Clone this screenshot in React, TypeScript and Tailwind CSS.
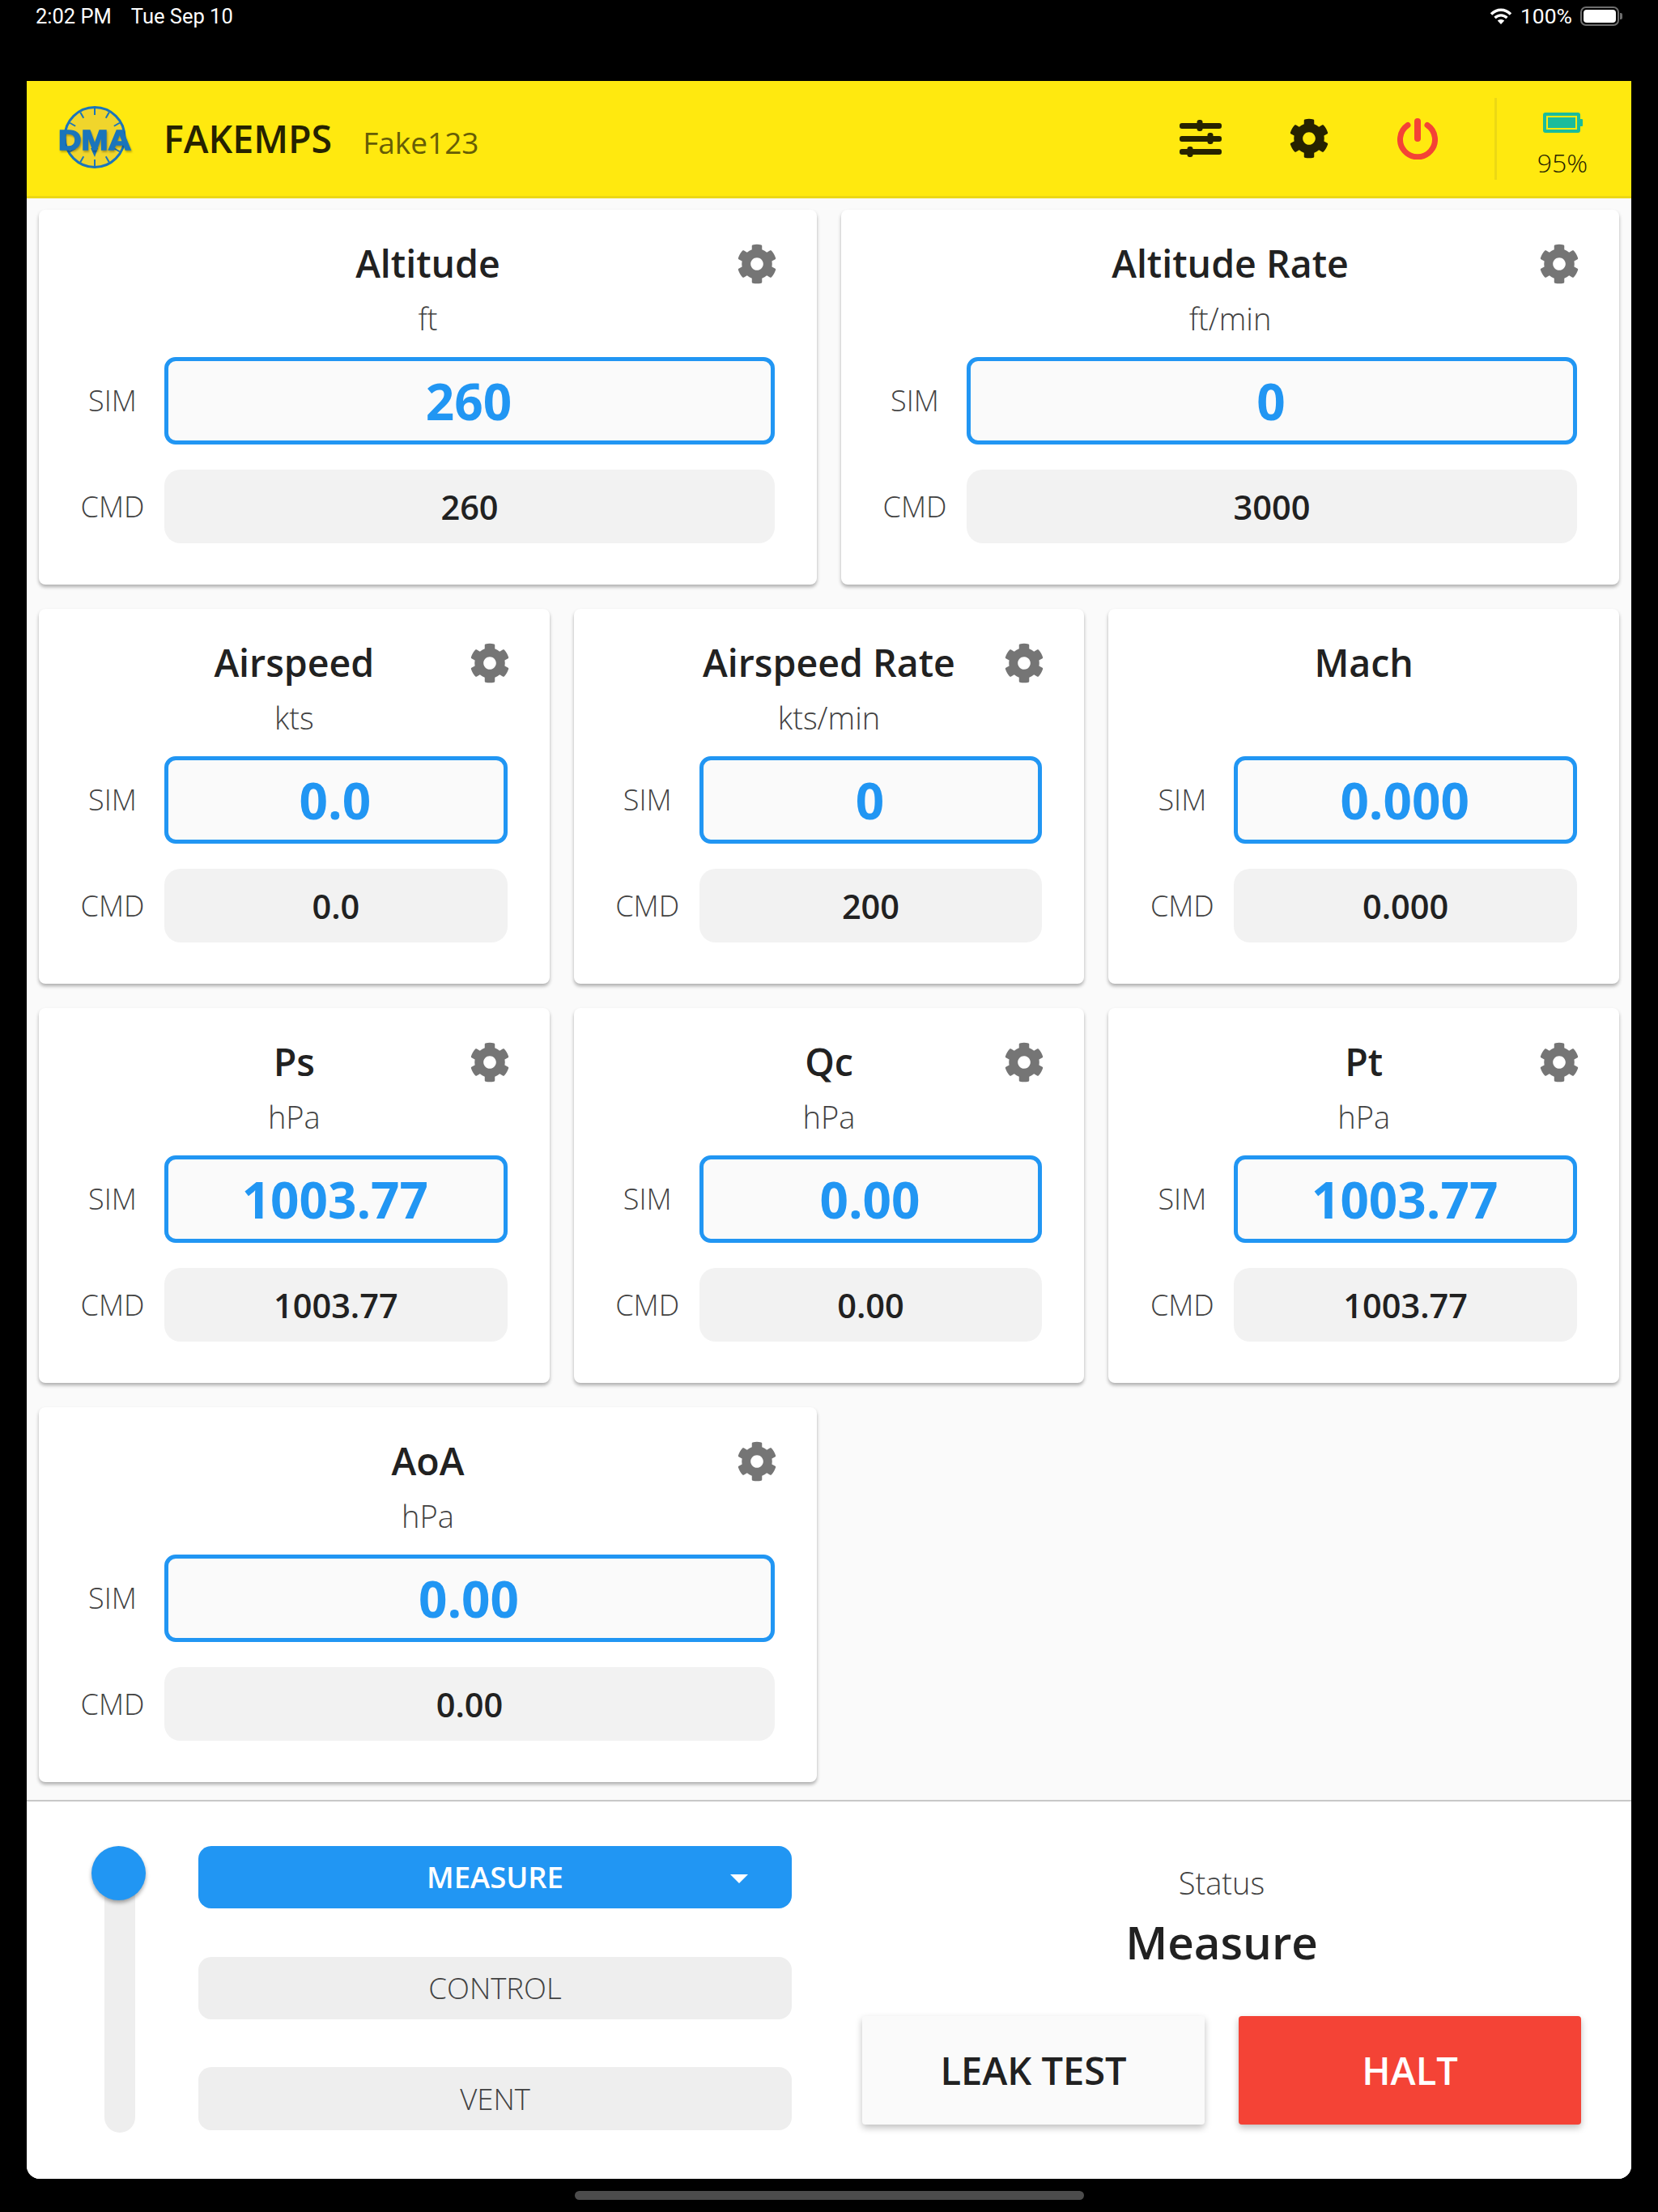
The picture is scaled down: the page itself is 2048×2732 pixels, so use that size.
const font = "font-['Open_Sans',sans-serif]";

function Gear({ className }: { className: string }) {
	return (
		<svg viewBox="0 0 512 512" className={className} fill="currentColor">
			<path d="M487.4 315.7l-42.6-24.6c4.3-23.2 4.3-47 0-70.2l42.6-24.6c4.9-2.8 7.1-8.6 5.5-14-11.1-35.6-30-67.8-54.7-94.6-3.8-4.1-10-5.1-14.8-2.3L380.8 110c-17.9-15.4-38.5-27.3-60.8-35.1V25.8c0-5.6-3.9-10.5-9.4-11.7-36.7-8.2-74.3-7.8-109.2 0-5.5 1.2-9.4 6.1-9.4 11.7V75c-22.2 7.9-42.8 19.8-60.8 35.1L88.7 85.5c-4.9-2.8-11-1.9-14.8 2.3-24.7 26.7-43.6 58.9-54.7 94.6-1.7 5.4.6 11.2 5.5 14L67.3 221c-4.3 23.2-4.3 47 0 70.2l-42.6 24.6c-4.9 2.8-7.1 8.6-5.5 14 11.1 35.6 30 67.8 54.7 94.6 3.8 4.1 10 5.1 14.8 2.3l42.6-24.6c17.9 15.4 38.5 27.3 60.8 35.1v49.2c0 5.6 3.9 10.5 9.4 11.7 36.7 8.2 74.3 7.8 109.2 0 5.5-1.2 9.4-6.1 9.4-11.7v-49.2c22.2-7.9 42.8-19.8 60.8-35.1l42.6 24.6c4.9 2.8 11 1.9 14.8-2.3 24.7-26.7 43.6-58.9 54.7-94.6 1.5-5.5-.7-11.3-5.6-14.1zM256 336c-44.1 0-80-35.9-80-80s35.9-80 80-80 80 35.9 80 80-35.9 80-80 80z" />
		</svg>
	);
}

function Sliders() {
	return (
		<svg viewBox="0 0 52 46" className="w-[52px] h-[46px]" fill="#262200">
			<rect x="0" y="4" width="52" height="7" rx="3" />
			<rect x="21.5" y="0" width="7" height="14" rx="3" />
			<rect x="0" y="20" width="52" height="7" rx="3" />
			<rect x="34.5" y="16" width="7" height="14" rx="3" />
			<rect x="0" y="36" width="52" height="7" rx="3" />
			<rect x="9.5" y="33" width="7" height="13" rx="3" />
		</svg>
	);
}

function Power() {
	return (
		<svg viewBox="0 0 50 51" className="w-[50px] h-[51px]" fill="none" stroke="#f44336" strokeLinecap="round">
			<path d="M13 8.5 A21.5 21.5 0 1 0 37 8.5" strokeWidth="7" />
			<path d="M25 4 V25" strokeWidth="8" />
		</svg>
	);
}

function Logo() {
	const ticks = [0, 30, 60, 120, 150, 180, 210, 240, 300, 330];
	return (
		<svg viewBox="0 0 90 80" className="w-[90px] h-[80px] overflow-visible">
			<circle cx="45" cy="38.5" r="37" fill="#f0d52c" stroke="#1b75bb" strokeWidth="3" />
			{ticks.map((t) => (
				<line
					key={t}
					x1="45"
					y1="3"
					x2="45"
					y2="11"
					stroke="#1b75bb"
					strokeWidth="2"
					transform={`rotate(${t} 45 38.5)`}
				/>
			))}
			<path d="M40 52 L45 63 L49 52 Z" fill="#1b75bb" />
			<text
				x="45"
				y="53.5"
				textAnchor="middle"
				fontFamily="'Liberation Sans', sans-serif"
				fontWeight="700"
				fontSize="35"
				fill="#1b75bb"
				stroke="#1b75bb"
				strokeWidth="1.6"
				textLength="90"
				lengthAdjust="spacingAndGlyphs"
				className="drop-shadow-[1px_2px_1px_rgba(0,0,0,0.3)]"
			>
				DMA
			</text>
		</svg>
	);
}

function StatusBar() {
	return (
		<div className="h-[100px] shrink-0 flex items-start justify-between pl-[44px] pr-[44px] pt-[6px] text-white text-[25.5px] leading-[28px] font-['Roboto',sans-serif]">
			<div className="flex gap-[24px]">
				<span>2:02 PM</span>
				<span>Tue Sep 10</span>
			</div>
			<div className="flex items-center gap-[10px]">
				<svg viewBox="0 0 28 22" className="w-[28px] h-[22px]" fill="none" stroke="#fff" strokeWidth="3.4">
					<path d="M2 8.5 C9 1.5 19 1.5 26 8.5" />
					<path d="M6.5 13 C11 8.8 17 8.8 21.5 13" />
					<path d="M14 21 L9.8 16.6 C12 14.6 16 14.6 18.2 16.6 Z" fill="#fff" stroke="none" />
				</svg>
				<span className="text-[26.5px]">100%</span>
				<div className="flex items-center gap-[1px]">
					<div className="w-[48px] h-[24px] rounded-[7px] border-2 border-[#6e6e6e] p-[2px]">
						<div className="w-full h-full rounded-[4px] bg-white" />
					</div>
					<div className="w-[3px] h-[8px] rounded-r-[2px] bg-[#6e6e6e]" />
				</div>
			</div>
		</div>
	);
}

function Header() {
	return (
		<div className={`h-[145px] shrink-0 flex items-center bg-[#ffe90f] border-b-[3px] border-[#ecd815] ${font}`}>
			<div className="ml-[39px] w-[90px] flex justify-center">
				<Logo />
			</div>
			<span className="ml-[40px] text-[46.5px] font-semibold text-[#262200] leading-none">FAKEMPS</span>
			<span className="ml-[38px] mt-[8px] text-[37px] text-[#665d06] leading-none">Fake123</span>
			<div className="ml-auto flex items-center">
				<Sliders />
				<Gear className="ml-[83px] w-[50px] h-[50px] text-[#262200]" />
				<div className="ml-[84px]">
					<Power />
				</div>
				<div className="ml-[70px] w-[3px] h-[101px] bg-[#ecd815]" />
				<div className="w-[166px] pr-[4px] pt-[16px] flex flex-col items-center">
					<svg viewBox="0 0 49 25" className="w-[49px] h-[25px]">
						<rect x="0" y="0" width="46" height="25" rx="3" fill="#1abc9c" />
						<rect x="5" y="5" width="36" height="15" fill="#1abc9c" stroke="#ffe90f" strokeWidth="2" />
						<rect x="45" y="8" width="4" height="9" rx="1" fill="#1abc9c" />
					</svg>
					<span className="mt-[19px] text-[32px] leading-[36px] font-light text-[#262200]">95%</span>
				</div>
			</div>
		</div>
	);
}

interface CardProps {
	title: string;
	unit?: string;
	sim: string;
	cmd: string;
	gear?: boolean;
	wide?: boolean;
}

function Card({ title, unit, sim, cmd, gear = true, wide = false }: CardProps) {
	return (
		<div
			className={`${wide ? "col-span-3" : "col-span-2"} relative h-[463px] bg-white rounded-[8px] shadow-[0_3px_4px_rgba(0,0,0,0.3)] pt-[38px] ${font}`}
		>
			{gear && <Gear className="absolute top-[42px] right-[49px] w-[50px] h-[50px] text-[#757575]" />}
			<div className="h-[56px] text-center text-[46.5px] leading-[56px] font-semibold text-[#212121]">{title}</div>
			<div className="h-[44px] mt-[18px] text-center text-[38px] leading-[44px] font-light text-[#424242]">{unit}</div>
			<div className="mt-[26px] flex items-center">
				<span className="w-[110px] ml-[36px] text-center text-[36px] font-light text-[#424242] shrink-0">SIM</span>
				<div className="flex-1 min-w-0 ml-[9px] mr-[52px] pr-[2px] h-[108px] rounded-[14px] border-[5px] border-[#2196f3] bg-[#fafafa] flex items-center justify-center text-[62px] font-bold text-[#2196f3]">
					{sim}
				</div>
			</div>
			<div className="mt-[31px] flex items-center">
				<span className="w-[110px] ml-[36px] text-center text-[36px] font-light text-[#424242] shrink-0">CMD</span>
				<div className="flex-1 min-w-0 ml-[9px] mr-[52px] pt-[2px] h-[91px] rounded-[20px] bg-[#f2f2f2] flex items-center justify-center text-[41.5px] font-semibold text-[#212121]">
					{cmd}
				</div>
			</div>
		</div>
	);
}

function ModeButton({ label, active = false, last = false }: { label: string; active?: boolean; last?: boolean }) {
	return (
		<div
			className={`relative ${last ? "h-[78px] -mt-[1px]" : "h-[77px]"} rounded-[16px] flex items-center justify-center text-[36.5px] ${
				active ? "bg-[#2196f3] text-white font-semibold" : "bg-[#eeeeee] text-[#424242] font-light"
			}`}
		>
			{label}
			{active && (
				<div className="absolute right-[54px] top-[35px] w-0 h-0 border-l-[11px] border-r-[11px] border-t-[11px] border-l-transparent border-r-transparent border-t-white" />
			)}
		</div>
	);
}

export default function App() {
	return (
		<div className="w-[2048px] h-[2732px] bg-black flex flex-col overflow-hidden">
			<StatusBar />
			<div className="mx-[33px] h-[2591px] shrink-0 flex flex-col rounded-b-[16px] overflow-hidden bg-white">
				<Header />
				<div className="flex-1 min-h-0 bg-[#fafafa] pt-[14px] px-[15px] pb-[21px]">
					<div className="grid grid-cols-6 gap-[30px]">
						<Card wide title="Altitude" unit="ft" sim="260" cmd="260" />
						<Card wide title="Altitude Rate" unit="ft/min" sim="0" cmd="3000" />
						<Card title="Airspeed" unit="kts" sim="0.0" cmd="0.0" />
						<Card title="Airspeed Rate" unit="kts/min" sim="0" cmd="200" />
						<Card title="Mach" sim="0.000" cmd="0.000" gear={false} />
						<Card title="Ps" unit="hPa" sim="1003.77" cmd="1003.77" />
						<Card title="Qc" unit="hPa" sim="0.00" cmd="0.00" />
						<Card title="Pt" unit="hPa" sim="1003.77" cmd="1003.77" />
						<Card wide title="AoA" unit="hPa" sim="0.00" cmd="0.00" />
					</div>
				</div>
				<div className={`h-[468px] shrink-0 bg-white border-t-[2px] border-[#c8c8c8] flex pt-[55px] ${font}`}>
					<div className="relative ml-[96px] w-[38px] h-[354px] rounded-full bg-[#eeeeee]">
						<div className="absolute -left-[16px] top-0 w-[67px] h-[67px] rounded-full bg-[#2196f3] shadow-[0_3px_5px_rgba(0,0,0,0.35)]" />
					</div>
					<div className="ml-[78px] w-[733px] flex flex-col gap-[60px]">
						<ModeButton active label="MEASURE" />
						<ModeButton label="CONTROL" />
						<ModeButton last label="VENT" />
					</div>
					<div className="ml-[87px] w-[888px] flex flex-col items-start">
						<div className="w-[888px] text-center">
							<div className="mt-[20px] text-[38px] leading-[50px] font-light text-[#424242]">Status</div>
							<div className="mt-[14px] text-[56.5px] leading-[70px] font-semibold text-[#212121]">Measure</div>
						</div>
						<div className="mt-[56px] flex gap-[42px]">
							<div className="w-[423px] h-[134px] rounded-[4px] bg-[#fafafa] shadow-[0_4px_8px_rgba(0,0,0,0.25)] flex items-center justify-center text-[47px] font-semibold text-[#212121]">
								LEAK TEST
							</div>
							<div className="w-[423px] h-[134px] rounded-[4px] bg-[#f44336] shadow-[0_4px_8px_rgba(0,0,0,0.25)] flex items-center justify-center text-[47px] font-semibold text-white">
								HALT
							</div>
						</div>
					</div>
				</div>
			</div>
			<div className="flex justify-center pt-[15px]">
				<div className="w-[629px] h-[11px] rounded-full bg-[#4c4c4c]" />
			</div>
		</div>
	);
}
